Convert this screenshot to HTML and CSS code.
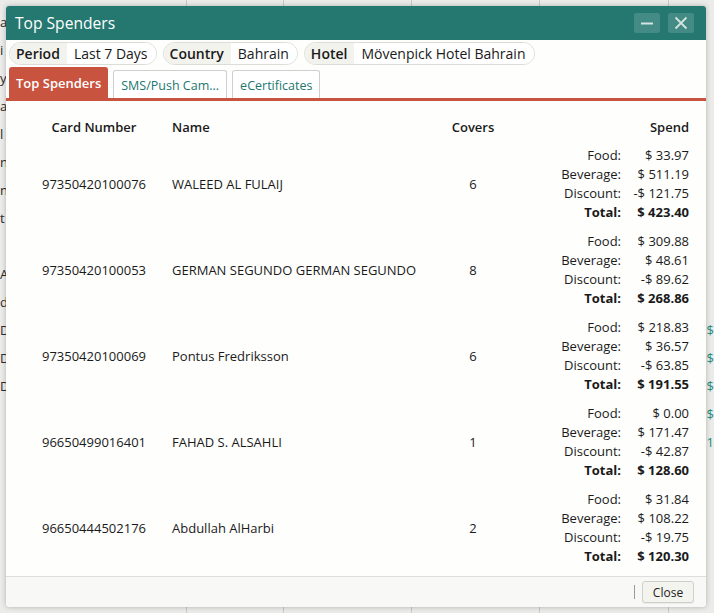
FILE: index.html
```html
<!DOCTYPE html>
<html>
<head>
<meta charset="utf-8">
<link rel="stylesheet" href="styles.css">
</head>
<body>
<div class="page">
  <div class="bgcol bg-left">
    <div class="bgrow">a</div><div class="bgrow">i</div><div class="bgrow">y</div><div class="bgrow">a</div>
    <div class="bgrow">l</div><div class="bgrow">n</div><div class="bgrow">n</div><div class="bgrow">t</div>
    <div class="bgrow"></div><div class="bgrow">A</div><div class="bgrow">d</div><div class="bgrow">D</div>
    <div class="bgrow">D</div><div class="bgrow">D</div>
  </div>
  <div class="bgcol c2"></div>
  <div class="bgcol c3"></div>
  <div class="bgcol c3"></div>
  <div class="bgcol c3"></div>
  <div class="bgcol bg-right">
    <div class="bgrow"></div><div class="bgrow"></div><div class="bgrow"></div><div class="bgrow"></div>
    <div class="bgrow"></div><div class="bgrow"></div><div class="bgrow"></div><div class="bgrow"></div>
    <div class="bgrow"></div><div class="bgrow"></div><div class="bgrow"></div>
    <div class="bgrow money">$</div><div class="bgrow money">$</div><div class="bgrow money">$</div>
    <div class="bgrow money">$</div><div class="bgrow money">1</div>
  </div>
</div>

<div class="dialog">
  <div class="titlebar">
    <div class="title">Top Spenders</div>
    <div class="tbtns">
      <div class="tbtn"><svg width="14" height="14" viewBox="0 0 14 14"><path d="M1 7.5H13" stroke="#d4e3e0" stroke-width="2"/></svg></div>
      <div class="tbtn"><svg width="14" height="14" viewBox="0 0 14 14"><path d="M1.5 1.5L12.5 12.5M12.5 1.5L1.5 12.5" stroke="#d4e3e0" stroke-width="1.8"/></svg></div>
    </div>
  </div>

  <div class="chips">
    <div class="chip"><span class="clabel">Period</span><span class="cval">Last 7 Days</span></div>
    <div class="chip"><span class="clabel">Country</span><span class="cval">Bahrain</span></div>
    <div class="chip"><span class="clabel">Hotel</span><span class="cval">Mövenpick Hotel Bahrain</span></div>
  </div>

  <div class="tabs">
    <div class="tab active">Top Spenders</div>
    <div class="tab">SMS/Push Cam...</div>
    <div class="tab">eCertificates</div>
  </div>

  <div class="content">
    <div class="grid head">
      <div class="c-card">Card Number</div>
      <div class="c-name">Name</div>
      <div class="c-cov">Covers</div>
      <div class="c-spend">Spend</div>
    </div>

    <div class="grid row">
      <div class="c-card">97350420100076</div>
      <div class="c-name">WALEED AL FULAIJ</div>
      <div class="c-cov">6</div>
      <div class="c-spend spend">
        <span class="lbl">Food:</span><span class="val">$ 33.97</span>
        <span class="lbl">Beverage:</span><span class="val">$ 511.19</span>
        <span class="lbl">Discount:</span><span class="val">-$ 121.75</span>
        <span class="lbl b">Total:</span><span class="val b">$ 423.40</span>
      </div>
    </div>

    <div class="grid row">
      <div class="c-card">97350420100053</div>
      <div class="c-name">GERMAN SEGUNDO GERMAN SEGUNDO</div>
      <div class="c-cov">8</div>
      <div class="c-spend spend">
        <span class="lbl">Food:</span><span class="val">$ 309.88</span>
        <span class="lbl">Beverage:</span><span class="val">$ 48.61</span>
        <span class="lbl">Discount:</span><span class="val">-$ 89.62</span>
        <span class="lbl b">Total:</span><span class="val b">$ 268.86</span>
      </div>
    </div>

    <div class="grid row">
      <div class="c-card">97350420100069</div>
      <div class="c-name">Pontus Fredriksson</div>
      <div class="c-cov">6</div>
      <div class="c-spend spend">
        <span class="lbl">Food:</span><span class="val">$ 218.83</span>
        <span class="lbl">Beverage:</span><span class="val">$ 36.57</span>
        <span class="lbl">Discount:</span><span class="val">-$ 63.85</span>
        <span class="lbl b">Total:</span><span class="val b">$ 191.55</span>
      </div>
    </div>

    <div class="grid row">
      <div class="c-card">96650499016401</div>
      <div class="c-name">FAHAD S. ALSAHLI</div>
      <div class="c-cov">1</div>
      <div class="c-spend spend">
        <span class="lbl">Food:</span><span class="val">$ 0.00</span>
        <span class="lbl">Beverage:</span><span class="val">$ 171.47</span>
        <span class="lbl">Discount:</span><span class="val">-$ 42.87</span>
        <span class="lbl b">Total:</span><span class="val b">$ 128.60</span>
      </div>
    </div>

    <div class="grid row">
      <div class="c-card">96650444502176</div>
      <div class="c-name">Abdullah AlHarbi</div>
      <div class="c-cov">2</div>
      <div class="c-spend spend">
        <span class="lbl">Food:</span><span class="val">$ 31.84</span>
        <span class="lbl">Beverage:</span><span class="val">$ 108.22</span>
        <span class="lbl">Discount:</span><span class="val">-$ 19.75</span>
        <span class="lbl b">Total:</span><span class="val b">$ 120.30</span>
      </div>
    </div>
  </div>

  <div class="footer">
    <div class="sep"></div>
    <button class="closebtn">Close</button>
  </div>
</div>
</body>
</html>
```

FILE: styles.css
```css
html, body {
  margin: 0;
  padding: 0;
}
body {
  width: 714px;
  height: 613px;
  overflow: hidden;
  position: relative;
  background: #ececeb;
  font-family: "Open Sans", "DejaVu Sans", sans-serif;
  color: #1a1a1a;
}

/* background page behind the modal */
.page {
  display: flex;
  height: 613px;
}
.bgcol {
  border-right: 1px solid #c9c9c9;
  background: #ebebea;
}
.bg-left {
  width: 188px;
  padding-top: 8px;
  box-sizing: border-box;
  font-size: 13px;
  color: #2a2a2a;
}
.c2 { width: 96px; }
.c3 { width: 128px; }
.bg-right {
  flex: 1;
  border-right: none;
  padding-top: 8px;
  box-sizing: border-box;
  font-size: 13px;
}
.bgrow {
  height: 28px;
  line-height: 28px;
  padding-left: 0;
}
.bg-right .bgrow { padding-left: 38px; }
.money { color: #1f8a7c; }

/* dialog window */
.dialog {
  position: absolute;
  left: 6px;
  top: 6px;
  width: 700px;
  height: 601px;
  background: #fefefd;
  border-radius: 3px 3px 4px 4px;
  box-shadow: 0 0 5px rgba(0, 0, 0, 0.25);
  display: flex;
  flex-direction: column;
  overflow: hidden;
}
.titlebar {
  height: 34px;
  background: #257870;
  display: flex;
  align-items: center;
  justify-content: space-between;
  padding: 0 12px 0 9px;
  flex-shrink: 0;
}
.title {
  color: #fff;
  font-size: 15.6px;
  line-height: 24px;
  margin-top: -1px;
}
.tbtns {
  display: flex;
  gap: 8px;
  margin-top: -1px;
}
.tbtn {
  width: 26px;
  height: 20px;
  border-radius: 2px;
  background: rgba(255, 255, 255, 0.14);
  display: flex;
  align-items: center;
  justify-content: center;
}

.chips {
  display: flex;
  gap: 6px;
  padding: 2px 0 0 3px;
  flex-shrink: 0;
}
.chip {
  display: flex;
  height: 23px;
  box-sizing: border-box;
  border: 1px solid #dcdcd8;
  border-radius: 12px;
  overflow: hidden;
  font-size: 14px;
  line-height: 21px;
}
.clabel {
  background: #f3f3ee;
  font-weight: 600;
  padding: 0 7px 0 6px;
}
.cval {
  background: #fff;
  padding: 0 8px 0 7px;
}

.tabs {
  display: flex;
  align-items: flex-end;
  gap: 5px;
  padding: 2px 0 0 3px;
  border-bottom: 3px solid #c8533f;
  flex-shrink: 0;
}
.tab {
  height: 28px;
  box-sizing: border-box;
  border: 1px solid #cfcfcf;
  border-bottom: none;
  border-radius: 3px 3px 0 0;
  padding: 0 7px;
  font-size: 12.5px;
  line-height: 29px;
  color: #22766e;
  background: #fff;
}
.tab.active {
  height: 31px;
  background: #c8533f;
  border-color: #c8533f;
  color: #fff;
  font-weight: 600;
  padding: 0 6px;
  line-height: 30px;
  font-size: 13px;
}

.content {
  flex: 1;
  overflow: hidden;
  font-size: 13px;
}
.grid {
  display: grid;
  grid-template-columns: 156px 258px 86px 1fr;
  padding: 0 17px 0 10px;
  align-items: center;
}
.head {
  font-weight: 600;
  line-height: 20px;
  padding-top: 16px;
  padding-bottom: 4px;
}
.row {
  padding-top: 5px;
  padding-bottom: 5px;
}
.c-card { text-align: center; }
.c-name { text-align: left; }
.c-cov { text-align: center; }
.c-spend { text-align: right; }
.spend {
  display: grid;
  grid-template-columns: 1fr 68px;
  line-height: 19px;
}
.lbl { text-align: right; }
.val { text-align: right; }
.b { font-weight: 700; }

.footer {
  height: 30px;
  flex-shrink: 0;
  border-top: 1px solid #dddddb;
  background: #f8f8f7;
  display: flex;
  align-items: center;
  justify-content: flex-end;
  padding-right: 12px;
}
.sep {
  width: 1px;
  height: 14px;
  background: #9a9a9a;
  margin-right: 7px;
}
.closebtn {
  width: 52px;
  height: 22px;
  border: 1px solid #cfcfca;
  border-radius: 3px;
  background: #f4f4ef;
  font-family: "Open Sans", "DejaVu Sans", sans-serif;
  font-size: 12px;
  color: #222;
  padding: 0;
  box-shadow: 0 1px 1px rgba(0,0,0,0.06);
}
```
